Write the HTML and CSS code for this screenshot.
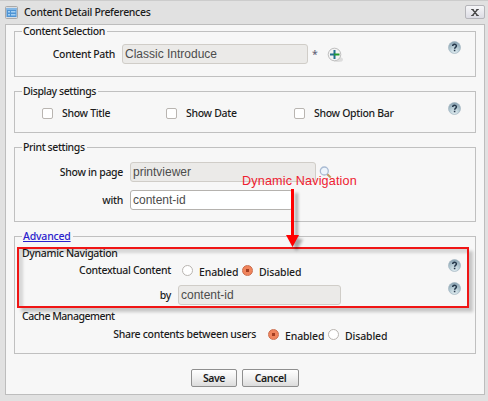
FILE: index.html
```html
<!DOCTYPE html>
<html lang="en">
<head>
<meta charset="utf-8">
<title>Content Detail Preferences</title>
<link rel="stylesheet" href="styles.css">
</head>
<body>
<svg class="defs" width="0" height="0" aria-hidden="true">
  <defs>
    <radialGradient id="ball" cx=".5" cy=".85" r=".9">
      <stop offset="0" stop-color="#e3eff3"/><stop offset=".5" stop-color="#b3c8d2"/><stop offset="1" stop-color="#7f99aa"/>
    </radialGradient>
    <symbol id="help" viewBox="0 0 13 13">
      <circle cx="6.5" cy="6.5" r="6" fill="url(#ball)" stroke="#a3b6c1" stroke-width=".7"/>
      <path d="M4.7 5.1C4.7 2.7 8.5 2.8 8.4 5C8.3 6.3 6.7 6.3 6.6 7.7" fill="none" stroke="#26384b" stroke-width="1.5"/>
      <rect x="5.8" y="8.7" width="1.6" height="1.6" fill="#26384b"/>
    </symbol>
  </defs>
</svg>
<div class="window">
  <header class="titlebar">
    <svg class="app-icon" viewBox="0 0 13 13">
      <rect x=".5" y=".5" width="12" height="12" rx="1" fill="#d9dde2" stroke="#a9a9a9"/>
      <rect x="1.5" y="2" width="10" height="9" fill="#4f94d4"/>
      <path d="M1.5 2h10v2h-10z" fill="#82b7e6"/>
      <path d="M3 5h2v1.5h-2zM3 8h2v1.5h-2zM6 5h4.500v1.500h-4.500zM6 8h4.500v1.500h-4.500z" fill="#a5d0f2"/>
    </svg>
    <h1 class="title">Content Detail Preferences</h1>
    <button class="close" aria-label="Close"><svg viewBox="0 0 8 7"><path d="M.2.5h2.6M5.200.5h2.600M.2 6.500h2.600M5.200 6.500h2.600M1.500.5l5 6M6.500.5l-5 6" fill="none" stroke="#444" stroke-width="1.2"/></svg></button>
  </header>
  <main class="panel">
    <fieldset class="group selection">
      <legend>Content Selection</legend>
      <div class="row">
        <label class="label">Content Path</label>
        <span class="field wide">Classic Introduce</span>
        <span class="star">*</span>
        <svg class="add" viewBox="0 0 17 17">
          <ellipse cx="11" cy="12.500" rx="5" ry="2.500" fill="#ddd"/>
          <circle cx="7.500" cy="7.500" r="6.300" fill="#f3f3f3" stroke="#bfbfbf"/>
          <path d="M7.500 3v9M3 7.500h4.500" stroke="#22708f" stroke-width="2"/><path d="M7 7.500h5.500" stroke="#219a2e" stroke-width="2"/>
        </svg>
      </div>
      <svg class="help"><use href="#help"/></svg>
    </fieldset>
    <fieldset class="group display">
      <legend>Display settings</legend>
      <div class="checks">
        <label class="check"><i class="box"></i><span>Show Title</span></label>
        <label class="check"><i class="box"></i><span>Show Date</span></label>
        <label class="check"><i class="box"></i><span>Show Option Bar</span></label>
      </div>
      <svg class="help"><use href="#help"/></svg>
    </fieldset>
    <fieldset class="group print">
      <legend>Print settings</legend>
      <div class="row">
        <label class="label">Show in page</label>
        <span class="field wide">printviewer</span>
        <svg class="search" viewBox="0 0 13 13">
          <path d="M8 8l3.700 3.500" stroke="#c29a62" stroke-width="2"/>
          <circle cx="5.300" cy="5" r="4" fill="#eef5fc" stroke="#a9bbd3" stroke-width="1.300"/>
        </svg>
      </div>
      <div class="row">
        <label class="label">with</label>
        <span class="field editable">content-id</span>
      </div>
    </fieldset>
    <fieldset class="group advanced">
      <legend><a href="#">Advanced</a></legend>
      <h2 class="sub">Dynamic Navigation</h2>
      <div class="row context">
        <label class="label">Contextual Content</label>
        <i class="radio"></i><span class="option">Enabled</span>
        <i class="radio on"></i><span class="option">Disabled</span>
        <svg class="help"><use href="#help"/></svg>
      </div>
      <div class="row by">
        <label class="label">by</label>
        <span class="field">content-id</span>
        <svg class="help"><use href="#help"/></svg>
      </div>
      <h2 class="sub cache">Cache Management</h2>
      <div class="row share">
        <label class="label">Share contents between users</label>
        <i class="radio on"></i><span class="option">Enabled</span>
        <i class="radio"></i><span class="option">Disabled</span>
      </div>
    </fieldset>
    <footer class="actions">
      <button class="button save">Save</button>
      <button class="button cancel">Cancel</button>
    </footer>
  </main>
</div>
<div class="callout-box"></div>
<svg class="callout-arrow" viewBox="0 0 14 59"><path d="M5 0h3v46h5L6.500 58L0 46h5z" fill="#f00"/></svg>
<span class="callout-text">Dynamic Navigation</span>
</body>
</html>
```

FILE: styles.css
```css
* { box-sizing: border-box; }
body {
  margin: 0;
  position: relative;
  width: 488px;
  height: 401px;
  overflow: hidden;
  background: #e1e1e1;
  color: #1c1c1c;
  font: 500 10.5px/13px "Noto Sans", "Open Sans", sans-serif;
  letter-spacing: -.32px;
  white-space: nowrap;
}
.defs { position: absolute; }
.window { height: 401px; border-top: 1px solid #ccc; padding: 0 3px 0 5px; }
.titlebar { height: 23px; display: flex; align-items: flex-start; padding-top: 4px; }
.app-icon { width: 13px; height: 13px; margin: 1px 6px 0 0; }
.title { margin: 0; font-size: 10.5px; line-height: 14px; font-weight: 500; }
.close {
  width: 20px; height: 14px; margin-left: auto; padding: 0;
  display: flex; align-items: center; justify-content: center;
  border: 1px solid #b5b5ba; border-radius: 2px;
  background: linear-gradient(#f6f6f8, #dcdce4);
}
.close svg { width: 8px; height: 7px; }
.panel { width: 480px; height: 371px; padding: 0 8px; border: 1px solid #bdbdbd; background: #f7f7f7; }
.group {
  position: relative;
  min-width: 0;
  width: 462px;
  margin: 0;
  padding: 0;
  border: 1px solid #c0c0c0;
}
legend { margin-left: 7px; padding: 0 2px 0 1px; height: 13px; letter-spacing: -.4px; }
a { color: #2a22cc; letter-spacing: -.2px; }
.row { display: flex; align-items: center; height: 20px; }
.label { text-align: right; flex: none; }
.field {
  width: 163px; height: 20px; padding: 0 2px;
  border: 1px solid #d0cdc8; border-radius: 3px;
  background: #ebeae8; color: #4c4c4c;
  font: 12px/18px "Liberation Sans", sans-serif;
  letter-spacing: 0;
}
.wide { width: 186px; }
.editable { background: #fff; border-color: #b5b2ae; }
.help { position: absolute; right: 14px; width: 13px; height: 13px; }

.selection { height: 52px; }
.selection .row { margin-top: 6px; }
.selection .label { width: 100px; margin-right: 7px; }
.selection .help { top: 3px; }
.star { margin-left: 4px; width: 12px; color: #667; }
.add { width: 17px; height: 17px; margin-top: 2px; margin-left: 3px; }

.display { height: 48px; margin-top: 8px; }
.display .help { top: 4px; }
.checks { display: grid; grid-template-columns: 124px 128px auto; margin: 9px 0 0 27px; }
.check { display: flex; align-items: center; }
.box { width: 11px; height: 11px; margin-right: 9px; border: 1px solid #b9b5b1; border-radius: 2px; background: #fff; }

.print { height: 81px; margin-top: 8px; }
.print .row { margin-top: 8px; }
.print .label { width: 108px; margin-right: 7px; }
.search { width: 13px; height: 13px; margin-left: 3px; }

.advanced { height: 124px; margin-top: 8px; }
.sub { margin: 4px 0 0 7px; font-size: 10.5px; line-height: 13px; font-weight: 500; }
.sub.cache { margin-top: 5px; letter-spacing: -.5px; }
.context { height: 18px; margin-top: 1px; }
.context .label { width: 156px; margin-right: 11px; }
.context .help { top: 16px; }
.by { margin-top: 6px; }
.by .label { width: 156px; margin-right: 7px; }
.by .help { top: 39px; }
.radio { flex: none; width: 11px; height: 11px; margin-right: 6px; border: 1px solid #b9b5b1; border-radius: 50%; background: #fff; }
.radio.on { border-color: #cc6d4c; background: radial-gradient(circle, #a33d20 0 1.5px, #f0845c 2px); }
.option { width: 43px; position: relative; top: 2px; letter-spacing: -.15px; }
.share { height: 20px; margin-top: 1px; }
.share .label { width: 241px; margin-right: 12px; }

.actions { display: flex; gap: 5px; margin: 15px 0 0 177px; }
.button {
  height: 18px; padding: 0; border: 1px solid #8f8f8f; border-radius: 2px;
  background: linear-gradient(#fff, #f0f0f0 50%, #dcdcdc);
  color: #1c1c1c; font: 600 10.5px/14px "Noto Sans", sans-serif;
  letter-spacing: -.4px;
}
.save { width: 46px; }
.cancel { width: 57px; }

.callout-box {
  position: absolute; left: 17px; top: 247px; width: 452px; height: 61px;
  border: 2px solid #f01515;
  box-shadow: 4px 4px 3px #0003, inset 4px 4px 3px #0002;
}
.callout-arrow { position: absolute; left: 286px; top: 189px; width: 14px; height: 59px; filter: drop-shadow(4px 4px 1.5px #0005); }
.callout-text { position: absolute; left: 242px; top: 173px; color: #ee2030; font: 12.6px/16px "Liberation Sans", sans-serif; letter-spacing: .16px; }
```
